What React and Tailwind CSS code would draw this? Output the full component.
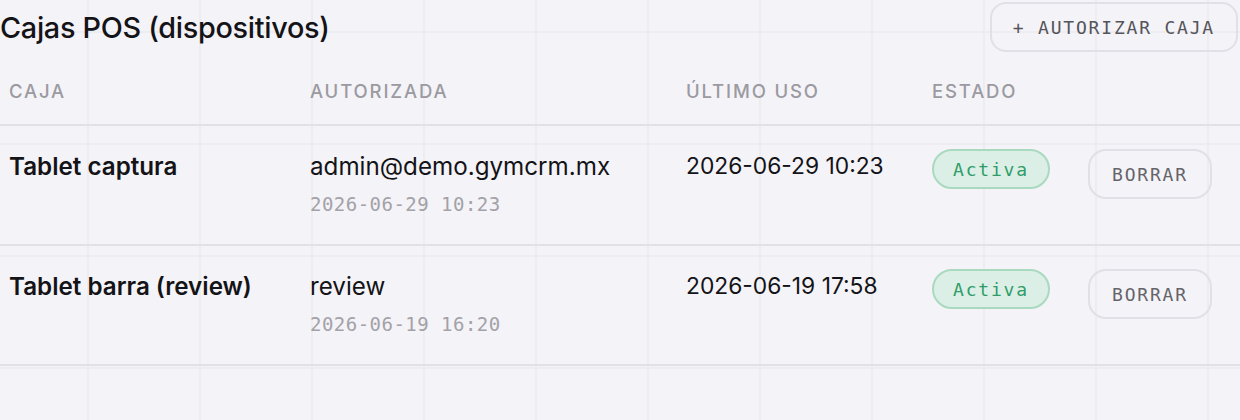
import React from 'react';

const rows = [
  { name: 'Tablet captura', by: 'admin@demo.gymcrm.mx', at: '2026-06-29 10:23', last: '2026-06-29 10:23' },
  { name: 'Tablet barra (review)', by: 'review', at: '2026-06-19 16:20', last: '2026-06-19 17:58' },
];

const mono = "font-['DejaVu_Sans_Mono','Liberation_Mono',monospace]";
const cols = 'grid grid-cols-[301px_376px_246px_156px_1fr]';

export default function App() {
  return (
    <div className="min-h-[420px] w-[1240px] overflow-hidden bg-[#f4f3f7] bg-[linear-gradient(to_right,#edecf0_2px,transparent_2px),linear-gradient(to_bottom,#edecf0_2px,transparent_2px)] bg-[size:112px_112px] bg-[position:87px_31px] font-['Inter','Noto_Sans',sans-serif] text-[#141317]">
      <div className="flex items-start justify-between pt-[2px]">
        <h2 className="pt-[8px] text-[28.8px] font-medium leading-[36px] tracking-[-0.01em]">Cajas POS (dispositivos)</h2>
        <button className={`${mono} mr-[2px] h-[50px] rounded-[16px] border-2 border-[#e2e0e6] px-[21px] text-[18px] uppercase tracking-[0.1em] text-[#55545a]`}>
          + Autorizar caja
        </button>
      </div>

      <div className={`${cols} mt-[7px] h-[67px] items-center border-b-2 border-[#e3e1e6] pl-[9px] text-[18.5px] font-medium uppercase tracking-[0.1em] text-[#9b9aa1]`}>
        <div>Caja</div>
        <div>Autorizada</div>
        <div>Último uso</div>
        <div>Estado</div>
        <div></div>
      </div>

      {rows.map((r) => (
        <div key={r.name} className={`${cols} h-[120px] items-start border-b-2 border-[#e3e1e6] pl-[9px] pt-[22px]`}>
          <div className="text-[24.2px] font-semibold leading-[38px]">{r.name}</div>
          <div className="flex flex-col">
            <span className="text-[24.2px] leading-[38px]">{r.by}</span>
            <span className={`${mono} mt-[5px] text-[19px] leading-[26px] tracking-[0.025em] text-[#a3a2a8]`}>{r.at}</span>
          </div>
          <div className="text-[22.8px] leading-[36px]">{r.last}</div>
          <div className="pt-[1px]">
            <span className={`${mono} inline-flex h-[40px] items-center rounded-full border-2 border-[#a9dac0] bg-[#dcefe6] px-[19px] text-[18px] tracking-[0.1em] text-[#2f9d69]`}>
              Activa
            </span>
          </div>
          <div className="pt-[1px]">
            <button className={`${mono} h-[50px] rounded-[18px] border-2 border-[#e2e0e6] px-[22px] text-[18px] uppercase tracking-[0.1em] text-[#65646a]`}>
              Borrar
            </button>
          </div>
        </div>
      ))}
    </div>
  );
}
